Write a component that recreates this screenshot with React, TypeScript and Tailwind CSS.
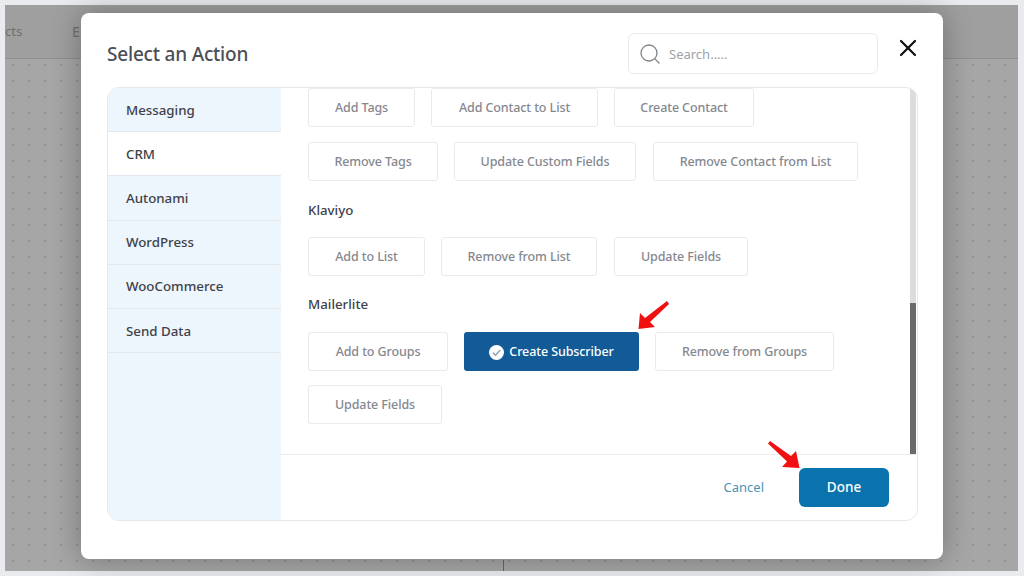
import React from "react";
import { Search, X } from "lucide-react";

const font = "font-['Noto_Sans',sans-serif]";

function Btn({ w, label }: { w: number; label: string }) {
  return (
    <button
      style={{ width: w }}
      className="h-[39px] shrink-0 rounded-[3px] border border-[#e8eaee] bg-white pt-[1px] text-[12.5px] font-medium tracking-[-0.1px] text-[#85888f]"
    >
      {label}
    </button>
  );
}

const sidebar = ["Messaging", "CRM", "Autonami", "WordPress", "WooCommerce", "Send Data"];

export default function App() {
  return (
    <div className={`${font} relative h-[576px] w-[1024px] overflow-hidden bg-[#e9ebee] p-[5px]`}>
      <div className="flex h-[566px] w-[1013px] flex-col overflow-hidden bg-[#a6a6a6]">
        <div className="flex h-[54px] shrink-0 items-center border-b border-[#8f8f8f] bg-[#9f9f9f] text-[#707070]">
          <span className="w-[16px] whitespace-nowrap text-[13px]">cts</span>
          <span className="ml-[51px] text-[14px]">E</span>
        </div>
        <div className="flex-1 bg-[radial-gradient(circle,#929292_1px,transparent_1.4px)] bg-[size:16px_16px] bg-[position:0px_-2px]"></div>
      </div>

      {/* vertical tick below the modal */}
      <div className="absolute left-[503px] top-[560px] h-[11px] w-px bg-[#666666]"></div>

      {/* modal */}
      <div className="absolute left-[81px] top-[13px] flex h-[546px] w-[862px] flex-col rounded-[8px] bg-white pl-[26px] pr-[25px] shadow-[0_0_30px_rgba(0,0,0,0.3)]">
        <div className="flex h-[74px] shrink-0 items-start justify-between">
          <h2 className="mt-[26px] text-[19px] font-medium leading-[30px] tracking-[-0.2px] text-[#4c4f56]">Select an Action</h2>
          <div className="flex items-start">
            <div className="mt-[20px] flex h-[41px] w-[250px] items-center gap-[7px] rounded-[6px] border border-[#e8eaee] pl-[9px]">
              <Search className="h-[24px] w-[24px] text-[#808388]" strokeWidth={1.3} />
              <span className="pt-[2px] text-[13px] text-[#a0a3a9]">Search.....</span>
            </div>
            <button className="ml-[16px] mr-[-4px] mt-[21px] text-[#111111]">
              <X className="h-[28px] w-[28px]" strokeWidth={1.9} />
            </button>
          </div>
        </div>

        <div className="flex h-[434px] overflow-hidden rounded-[12px] border border-[#e6e8ec]">
          <div className="w-[173px] shrink-0 bg-[#edf5fd]">
            {sidebar.map((s) => (
              <div
                key={s}
                className={`flex h-[44.2px] items-center border-b border-[#e4e8ee] pl-[18px] pt-[2px] text-[13.3px] font-medium text-[#3f4249] ${s === "CRM" ? "bg-white" : ""}`}
              >
                {s}
              </div>
            ))}
          </div>

          <div className="flex min-w-0 flex-1 flex-col">
            <div className="flex h-[366px] shrink-0">
              <div className="flex-1 pl-[27px]">
                <div className="flex gap-[16px]">
                  <Btn w={107} label="Add Tags" />
                  <Btn w={167} label="Add Contact to List" />
                  <Btn w={140} label="Create Contact" />
                </div>
                <div className="mt-[15px] flex gap-[16px]">
                  <Btn w={130} label="Remove Tags" />
                  <Btn w={182} label="Update Custom Fields" />
                  <div className="ml-px">
                    <Btn w={205} label="Remove Contact from List" />
                  </div>
                </div>
                <div className="mt-[19px] text-[13.3px] font-medium leading-[20px] text-[#3f4249]">Klaviyo</div>
                <div className="mt-[17px] flex gap-[16px]">
                  <Btn w={117} label="Add to List" />
                  <Btn w={156} label="Remove from List" />
                  <div className="ml-px">
                    <Btn w={134} label="Update Fields" />
                  </div>
                </div>
                <div className="mt-[18px] text-[13.3px] font-medium leading-[20px] text-[#3f4249]">Mailerlite</div>
                <div className="mt-[18px] flex gap-[16px]">
                  <Btn w={140} label="Add to Groups" />
                  <button className="flex h-[39px] w-[175px] shrink-0 items-center justify-center gap-[5px] rounded-[3px] bg-[#125b96] pt-[1px] text-[12.5px] font-medium tracking-[-0.1px] text-white">
                    <svg viewBox="0 0 16 16" className="h-[15px] w-[15px]">
                      <circle cx="8" cy="8" r="8" fill="#ffffff" />
                      <path d="M4.2 8.2 7 11l5-5.6" fill="none" stroke="#9aa9b8" strokeWidth="1.8" />
                    </svg>
                    Create Subscriber
                  </button>
                  <Btn w={179} label="Remove from Groups" />
                </div>
                <div className="mt-[14px]">
                  <Btn w={134} label="Update Fields" />
                </div>
              </div>
              <div className="mr-px flex w-[6px] shrink-0 flex-col bg-[#dcdcdc]">
                <div className="mt-auto h-[151px] bg-[#6a6a6a]"></div>
              </div>
            </div>
            <div className="flex flex-1 items-start justify-end border-t border-[#ececec] pr-[28px] pt-[13px]">
              <button className="mt-[10px] text-[13px] text-[#4b93b8]">Cancel</button>
              <button className="ml-[35px] h-[39px] w-[90px] rounded-[6px] bg-[#0a73ad] text-[13.5px] font-medium text-white">Done</button>
            </div>
          </div>
        </div>
      </div>

      {/* annotation arrows */}
      <svg className="pointer-events-none absolute left-0 top-0" width="1024" height="576" viewBox="0 0 1024 576">
        <polygon points="638.5,329 640,313 645,318 667,301 669,304 650,322 655,327" fill="#f01010" />
        <polygon points="799.5,468 782,467 787,461.5 768,443.5 770,441 791,456 796,451" fill="#f01010" />
      </svg>
    </div>
  );
}
